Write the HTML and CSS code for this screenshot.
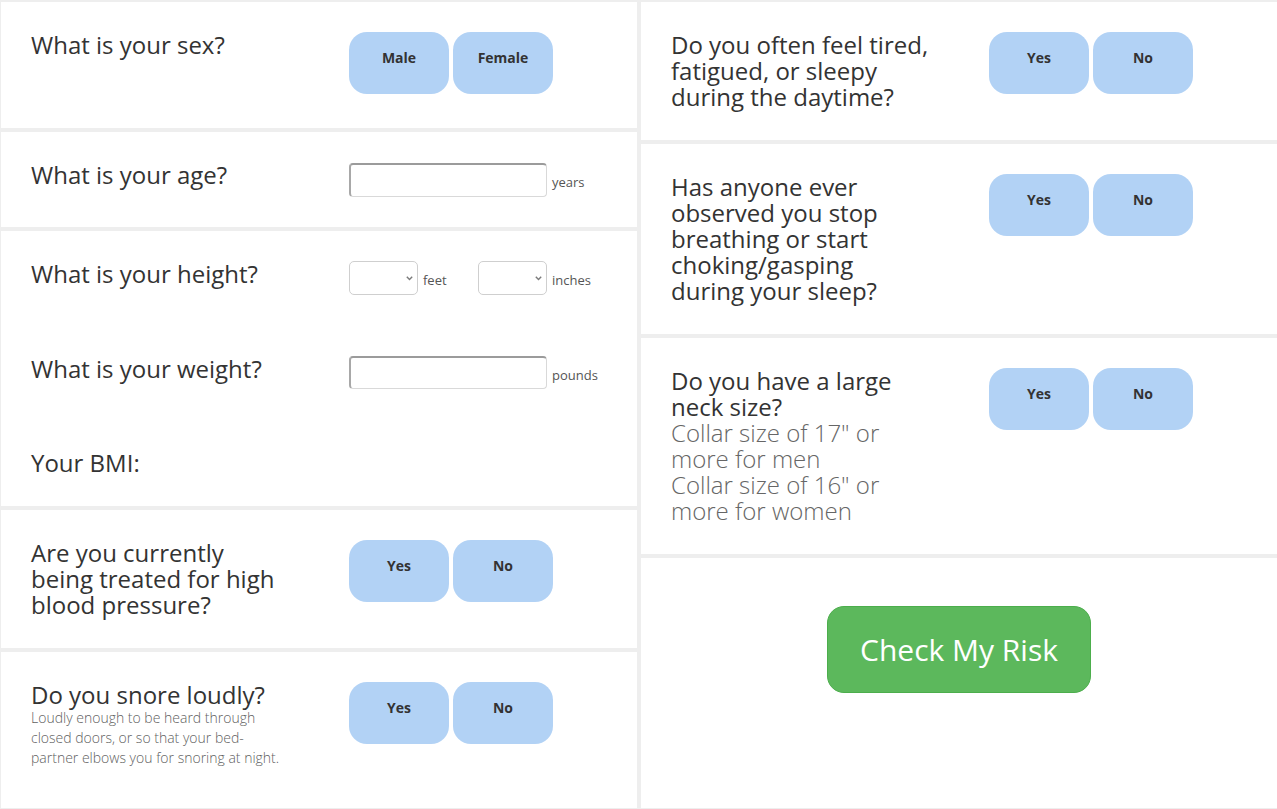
FILE: index.html
```html
<!DOCTYPE html>
<html lang="en">
<head>
<meta charset="utf-8">
<title>Sleep Apnea Risk</title>
<link rel="stylesheet" href="styles.css">
</head>
<body>
<div class="page">
  <div class="col">
    <section class="panel">
      <div class="q">What is your sex?</div>
      <div class="choices">
        <button class="choice">Male</button>
        <button class="choice">Female</button>
      </div>
    </section>

    <section class="panel">
      <div class="q">What is your age?</div>
      <div class="field field-age">
        <input class="text-input" type="text">
        <span class="unit">years</span>
      </div>
    </section>

    <section class="panel panel-stack">
      <div class="row">
        <div class="q">What is your height?</div>
        <div class="field">
          <div class="sel-group">
            <span class="sel-wrap">
              <select class="sel"><option></option></select>
              <svg class="chev" width="7" height="5" viewBox="0 0 7 5"><path d="M0.8 0.8 L3.5 3.6 L6.2 0.8" fill="none" stroke="#7a7a7a" stroke-width="1.4"/></svg>
            </span>
            <span class="unit">feet</span>
          </div>
          <div class="sel-group">
            <span class="sel-wrap">
              <select class="sel"><option></option></select>
              <svg class="chev" width="7" height="5" viewBox="0 0 7 5"><path d="M0.8 0.8 L3.5 3.6 L6.2 0.8" fill="none" stroke="#7a7a7a" stroke-width="1.4"/></svg>
            </span>
            <span class="unit">inches</span>
          </div>
        </div>
      </div>
      <div class="row">
        <div class="q">What is your weight?</div>
        <div class="field">
          <input class="text-input" type="text">
          <span class="unit">pounds</span>
        </div>
      </div>
      <div class="row">
        <div class="q">Your BMI:</div>
      </div>
    </section>

    <section class="panel">
      <div class="q">Are you currently being treated for high blood pressure?</div>
      <div class="choices">
        <button class="choice">Yes</button>
        <button class="choice">No</button>
      </div>
    </section>

    <section class="panel">
      <div class="q">Do you snore loudly?
        <p class="hint">Loudly enough to be heard through closed doors, or so that your bed-partner elbows you for snoring at night.</p>
      </div>
      <div class="choices">
        <button class="choice">Yes</button>
        <button class="choice">No</button>
      </div>
    </section>
  </div>

  <div class="col">
    <section class="panel">
      <div class="q">Do you often feel tired, fatigued, or sleepy during the daytime?</div>
      <div class="choices">
        <button class="choice">Yes</button>
        <button class="choice">No</button>
      </div>
    </section>

    <section class="panel">
      <div class="q">Has anyone ever observed you stop breathing or start choking/gasping during your sleep?</div>
      <div class="choices">
        <button class="choice">Yes</button>
        <button class="choice">No</button>
      </div>
    </section>

    <section class="panel">
      <div class="q">Do you have a large neck size?
        <span class="sub">Collar size of 17" or more for men</span>
        <span class="sub">Collar size of 16" or more for women</span>
      </div>
      <div class="choices">
        <button class="choice">Yes</button>
        <button class="choice">No</button>
      </div>
    </section>

    <section class="panel panel-submit">
      <button class="check">Check My Risk</button>
    </section>
  </div>
</div>
</body>
</html>
```

FILE: styles.css
```css
* {
  box-sizing: border-box;
}

html, body {
  margin: 0;
  padding: 0;
  background: #eeeeee;
}

body {
  font-family: "Open Sans", "Liberation Sans", sans-serif;
  color: #333333;
}

.page {
  display: grid;
  grid-template-columns: 636px 636px;
  column-gap: 4px;
  padding: 2px 0 1px 1px;
  background: #eeeeee;
  width: 1277px;
}

.col {
  display: flex;
  flex-direction: column;
  gap: 4px;
}

.panel {
  background: #ffffff;
  padding: 30px;
  display: flex;
  align-items: flex-start;
}

.panel-stack {
  flex-direction: column;
  gap: 61px;
}

.row {
  display: flex;
  align-items: flex-start;
}

.q {
  width: 258px;
  margin-right: 60px;
  flex: none;
  font-size: 24px;
  line-height: 26px;
  color: #333333;
}

.hint {
  margin: 0 0 10px 0;
  font-size: 14px;
  font-weight: 300;
  line-height: 20px;
  color: #5f5f5f;
}

.sub {
  display: block;
  font-weight: 300;
  color: #666666;
}

.choices {
  display: flex;
  gap: 4px;
  margin-bottom: 4px;
}

.choice {
  width: 100px;
  height: 62px;
  padding: 16px 0 0 0;
  border: none;
  border-radius: 18px;
  background: #b2d2f5;
  font-family: "Open Sans", "Liberation Sans", sans-serif;
  font-weight: 700;
  font-size: 14px;
  line-height: 20px;
  color: #333333;
  display: flex;
  justify-content: center;
  align-items: flex-start;
  cursor: pointer;
}

.field {
  display: flex;
  align-items: center;
}

.field-age {
  margin-top: 1px;
}

.text-input {
  width: 198px;
  height: 33px;
  border: 1px solid #d9d9d9;
  border-top: 2px solid #9b9b9b;
  border-left: 2px solid #a8a8a8;
  border-radius: 4px;
  background: #ffffff;
  padding: 0 6px;
  font-family: inherit;
  font-size: 14px;
  outline: none;
}

.field-age .text-input {
  height: 34px;
}

.unit {
  margin-left: 5px;
  margin-top: 4px;
  font-size: 13px;
  line-height: 18px;
  color: #555555;
}

.sel-group {
  display: flex;
  align-items: center;
  width: 129px;
}

.sel-wrap {
  position: relative;
  display: block;
  width: 69px;
  height: 34px;
}

.sel {
  appearance: none;
  -webkit-appearance: none;
  width: 69px;
  height: 34px;
  border: 1px solid #cfcfcf;
  border-radius: 5px;
  background: #ffffff;
  font-family: inherit;
  font-size: 13px;
  padding: 0 6px;
  outline: none;
}

.chev {
  position: absolute;
  right: 5px;
  top: 15px;
  pointer-events: none;
}

.panel-submit {
  flex: 1;
  justify-content: center;
  padding-top: 48px;
}

.check {
  background: #5cb85c;
  border: 1px solid #4cae4c;
  border-radius: 17px;
  color: #ffffff;
  font-family: "Open Sans", "Liberation Sans", sans-serif;
  font-size: 30px;
  line-height: 41px;
  padding: 22px 32px;
  cursor: pointer;
}
```
